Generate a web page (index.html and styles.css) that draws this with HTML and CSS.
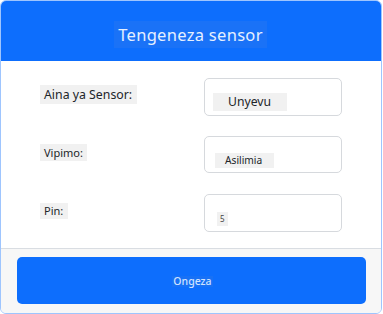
FILE: index.html
```html
<!DOCTYPE html>
<html>
<head>
<meta charset="utf-8">
<link rel="stylesheet" href="styles.css">
</head>
<body>
<div class="card">
  <div class="card-header">
    <span class="title">Tengeneza sensor</span>
  </div>
  <div class="card-body">
    <div class="row">
      <div class="label-col"><span class="chip label-lg">Aina ya Sensor:</span></div>
      <div class="field field-1"><span class="chip val-lg">Unyevu</span></div>
    </div>
    <div class="row">
      <div class="label-col"><span class="chip label-sm">Vipimo:</span></div>
      <div class="field field-2"><span class="chip val-sm">Asilimia</span></div>
    </div>
    <div class="row">
      <div class="label-col"><span class="chip label-pin">Pin:</span></div>
      <div class="field field-3"><span class="chip val-xs">5</span></div>
    </div>
  </div>
  <div class="card-footer">
    <div class="btn"><span class="btn-text">Ongeza</span></div>
  </div>
</div>
</body>
</html>
```

FILE: styles.css
```css
html, body {
  margin: 0;
  padding: 0;
  background: #ffffff;
}
body {
  font-family: "Noto Sans", "Open Sans", sans-serif;
  color: #212529;
}
.card {
  box-sizing: border-box;
  width: 382px;
  height: 314px;
  border: 1px solid #9ec5fe;
  border-radius: 6px;
  overflow: hidden;
  display: flex;
  flex-direction: column;
  background: #ffffff;
}
.card-header {
  height: 60px;
  background: #0d6efd;
  display: flex;
  align-items: center;
  justify-content: center;
}
.title {
  font-size: 16.5px;
  line-height: 27px;
  padding: 0 4px;
  color: #e6f0ff;
  background: #1a72f7;
  letter-spacing: 0.3px;
  margin-top: 6px;
  margin-right: 1px;
}
.card-body {
  height: 187px;
  box-sizing: border-box;
  padding: 17px 0 0 39px;
  display: flex;
  flex-direction: column;
  gap: 20px;
}
.row {
  display: flex;
  height: 38px;
}
.label-col {
  width: 164px;
  padding-top: 4px;
}
.chip {
  display: inline-block;
  background: #f1f1f1;
}
.label-lg {
  font-size: 12.3px;
  line-height: 19px;
  padding: 0 5px 0 4px;
}
.label-sm {
  font-size: 11px;
  line-height: 17px;
  padding: 0 4px;
  margin-top: -1px;
}
.label-pin {
  font-size: 11px;
  line-height: 16px;
  padding: 0 5px 0 4px;
}
.field {
  box-sizing: border-box;
  width: 138px;
  height: 38px;
  border: 1px solid #d6d9dd;
  border-radius: 5px;
  padding-top: 10px;
}
.field-2 { height: 37px; }
.val-lg {
  font-size: 12.2px;
  line-height: 18px;
  padding: 0 16px 0 15px;
  margin-left: 8px;
}
.val-sm {
  font-size: 10.2px;
  line-height: 15px;
  padding: 0 12px 0 10px;
  margin-left: 10px;
}
.val-xs {
  font-size: 8px;
  line-height: 14px;
  padding: 0 3px;
  margin-left: 12px;
  margin-top: 1px;
  color: #444;
}
.card-footer {
  flex: 1;
  background: #f7f7f7;
  border-top: 1px solid #d9dde2;
  padding: 8px 15px 0 16px;
}
.btn {
  height: 47px;
  background: #0d6efd;
  border-radius: 5px;
  display: flex;
  align-items: center;
  justify-content: center;
}
.btn-text {
  font-size: 10.5px;
  line-height: 11px;
  font-weight: 500;
  color: #cfe2ff;
  background: #1871f5;
  padding: 0 1px;
  margin-left: 2px;
  margin-top: 2px;
}
```
